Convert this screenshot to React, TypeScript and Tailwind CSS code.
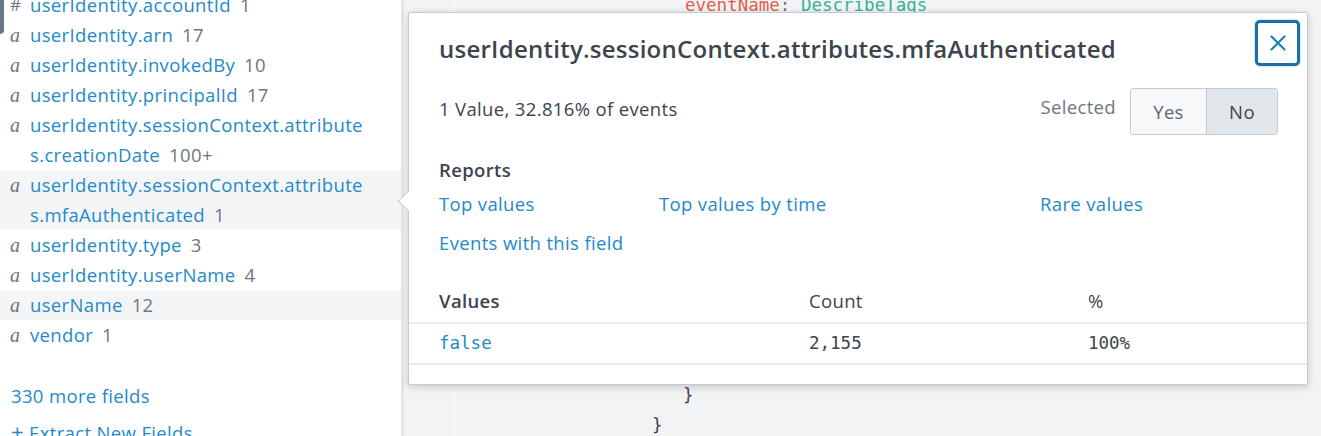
import React from "react";

type Field = {
  type: string;
  lines: string[];
  count: string;
  shaded?: boolean;
};

const fields: Field[] = [
  { type: "#", lines: ["userIdentity.accountId"], count: "1" },
  { type: "a", lines: ["userIdentity.arn"], count: "17" },
  { type: "a", lines: ["userIdentity.invokedBy"], count: "10" },
  { type: "a", lines: ["userIdentity.principalId"], count: "17" },
  {
    type: "a",
    lines: ["userIdentity.sessionContext.attribute", "s.creationDate"],
    count: "100+",
  },
  {
    type: "a",
    lines: ["userIdentity.sessionContext.attribute", "s.mfaAuthenticated"],
    count: "1",
    shaded: true,
  },
  { type: "a", lines: ["userIdentity.type"], count: "3" },
  { type: "a", lines: ["userIdentity.userName"], count: "4" },
  { type: "a", lines: ["userName"], count: "12", shaded: true },
  { type: "a", lines: ["vendor"], count: "1" },
];

function FieldRow({ field }: { field: Field }) {
  return (
    <div
      className={`flex leading-[30px] ${field.shaded ? "bg-[#f4f5f7]" : ""}`}
    >
      <span
        className={`w-[30px] shrink-0 pl-[10px] tracking-normal text-[#6b7785] ${
          field.type === "a"
            ? "font-['Liberation_Serif',serif] italic text-[20px]"
            : "text-[17px]"
        }`}
      >
        {field.type}
      </span>
      <div className="whitespace-nowrap text-[#2589c9]">
        {field.lines.map((line, i) => (
          <div key={i}>
            {line}
            {i === field.lines.length - 1 && (
              <span className="ml-[9px] text-[#6b7785]">{field.count}</span>
            )}
          </div>
        ))}
      </div>
    </div>
  );
}

function FieldSidebar() {
  return (
    <aside className="relative w-[401px] shrink-0 overflow-hidden bg-white">
      <div className="absolute left-0 top-0 h-[34px] w-[4px] rounded-br-[4px] bg-[#6b7585]" />
      <div className="-mt-[10px]">
        {fields.map((f, i) => (
          <FieldRow key={i} field={f} />
        ))}
      </div>
      <div className="mt-[31px] pl-[11px] leading-[30px] text-[#2589c9]">
        330 more fields
      </div>
      <div className="mt-[5px] pl-[11px] leading-[30px] text-[#2589c9]">
        <span className="text-[22px]">+</span> Extract New Fields
      </div>
    </aside>
  );
}

const codeLines: { indent: number; node: React.ReactNode }[] = [
  {
    indent: 230,
    node: (
      <>
        <span className="text-[#e0604a]">eventName</span>
        <span className="text-[#6b7785]">: </span>
        <span className="text-[#35b19c]">DescribeTags</span>
      </>
    ),
  },
  ...Array.from({ length: 12 }, () => ({ indent: 0, node: null })),
  { indent: 228, node: "}" },
  { indent: 197, node: "}" },
];

function CloseIcon() {
  return (
    <svg width="16" height="16" viewBox="0 0 16 16" fill="none">
      <path
        d="M1.5 1.5 L14.5 14.5 M14.5 1.5 L1.5 14.5"
        stroke="#1a82c1"
        strokeWidth="2.2"
        strokeLinecap="round"
      />
    </svg>
  );
}

function FieldSummary() {
  return (
    <div className="absolute left-[4px] top-[12px] h-[373px] w-[900px] rounded-[2px] border border-[#c3cbd4] bg-white shadow-[0_2px_8px_rgba(0,0,0,0.18)]">
      <div className="absolute left-[-8px] top-[180px] h-[16px] w-[16px] rotate-45 border-b border-l border-[#c3cbd4] bg-white" />
      <div className="flex items-start justify-between pr-[7px] pt-[7px]">
        <div className="mt-[14px] whitespace-nowrap pl-[30px] text-[24px] font-semibold leading-[30px] tracking-[0.25px] text-[#3c444d]">
          userIdentity.sessionContext.attributes.mfaAuthenticated
        </div>
        <button className="flex h-[46px] w-[45px] items-center justify-center rounded-[5px] border-[3px] border-[#1c6ea6] bg-white shadow-[0_0_2px_rgba(28,110,166,0.6)]">
          <CloseIcon />
        </button>
      </div>

      <div className="mt-[22px] flex items-start justify-between pl-[30px] pr-[29px]">
        <div className="pt-[9px] leading-[24px] text-[#3c444d]">
          1 Value, 32.816% of events
        </div>
        <div className="flex items-start">
          <span className="mr-[14px] pt-[7px] leading-[24px] text-[#6b7785]">
            Selected
          </span>
          <div className="flex h-[47px] overflow-hidden rounded-[3px] border border-[#c3cbd4]">
            <span className="flex w-[75px] items-center justify-center bg-[#f7f8fa] text-[#5c6773]">
              Yes
            </span>
            <span className="flex w-[71px] items-center justify-center border-l border-[#c3cbd4] bg-[#e1e6eb] text-[#3c444d]">
              No
            </span>
          </div>
        </div>
      </div>

      <div className="mt-[23px] pl-[30px] font-semibold leading-[24px] text-[#3c444d]">
        Reports
      </div>
      <div className="mt-[10px] grid grid-cols-[220px_381px_1fr] gap-y-[15px] pl-[30px] leading-[24px] text-[#2589c9]">
        <span>Top values</span>
        <span>Top values by time</span>
        <span>Rare values</span>
        <span>Events with this field</span>
      </div>

      <div className="mt-[25px] grid grid-cols-[400px_279px_1fr] border-b-2 border-[#e9ecef] leading-[42px]">
        <span className="pl-[30px] font-semibold text-[#3c444d]">Values</span>
        <span className="text-[#3c444d]">Count</span>
        <span className="text-[#3c444d]">%</span>
      </div>
      <div className="grid grid-cols-[400px_279px_1fr] border-b-2 border-[#e9ecef] font-['DejaVu_Sans_Mono',monospace] text-[17.5px] leading-[39px] tracking-normal">
        <span className="pl-[30px] text-[#2589c9]">false</span>
        <span className="text-[#3c444d]">2,155</span>
        <span className="text-[#3c444d]">100%</span>
      </div>
    </div>
  );
}

export default function App() {
  return (
    <div className="flex h-[436px] w-[1321px] overflow-hidden bg-white font-['Open_Sans',sans-serif] text-[18.5px] tracking-[0.35px]">
      <FieldSidebar />
      <main className="relative flex flex-1 border-l-[3px] border-[#e4e7ea] bg-[#f2f3f5]">
        <div className="w-[51px] shrink-0 border-r border-[#fafbfc]" />
        <div className="-mt-[10px] flex-1 font-['DejaVu_Sans_Mono',monospace] text-[17.5px] leading-[30px] tracking-normal text-[#3c444d]">
          {codeLines.map((l, i) => (
            <div key={i} className="h-[30px] whitespace-pre" style={{ paddingLeft: l.indent }}>
              {l.node}
            </div>
          ))}
        </div>
        <FieldSummary />
      </main>
    </div>
  );
}
